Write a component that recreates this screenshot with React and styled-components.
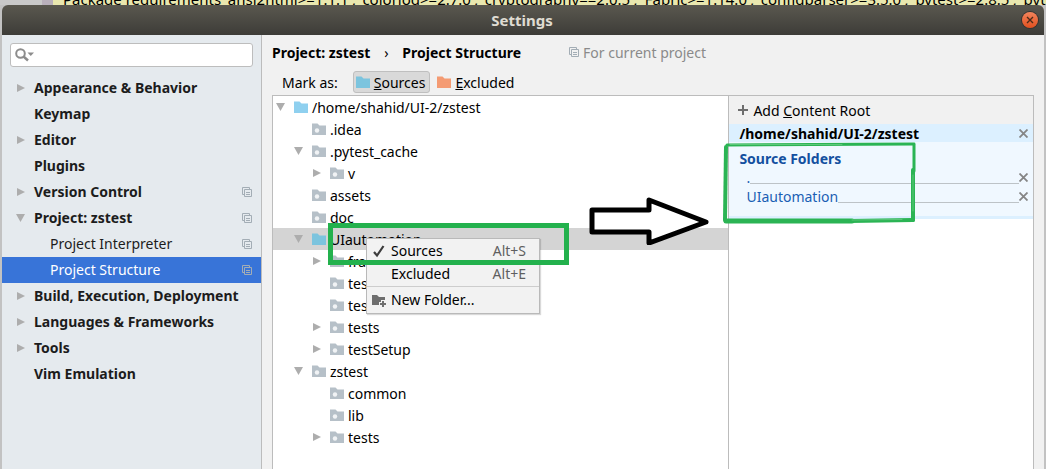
import React from 'react';
import styled, { createGlobalStyle } from 'styled-components';

const categories = [
  { label: 'Appearance & Behavior', arrow: 'right' },
  { label: 'Keymap' },
  { label: 'Editor', arrow: 'right' },
  { label: 'Plugins' },
  { label: 'Version Control', arrow: 'right', copy: true },
  { label: 'Project: zstest', arrow: 'down', copy: true },
  { label: 'Project Interpreter', child: true, copy: true },
  { label: 'Project Structure', child: true, copy: true, selected: true },
  { label: 'Build, Execution, Deployment', arrow: 'right' },
  { label: 'Languages & Frameworks', arrow: 'right' },
  { label: 'Tools', arrow: 'right' },
  { label: 'Vim Emulation' },
];

const folders = [
  { name: '/home/shahid/UI-2/zstest', level: 0, arrow: 'down', color: '#8fd0ef' },
  { name: '.idea', level: 1 },
  { name: '.pytest_cache', level: 1, arrow: 'down' },
  { name: 'v', level: 2, arrow: 'right' },
  { name: 'assets', level: 1 },
  { name: 'doc', level: 1 },
  { name: 'UIautomation', level: 1, arrow: 'down', color: '#7cc4de', selected: true },
  { name: 'fra', level: 2, arrow: 'right' },
  { name: 'tes', level: 2 },
  { name: 'tes', level: 2 },
  { name: 'tests', level: 2, arrow: 'right' },
  { name: 'testSetup', level: 2, arrow: 'right' },
  { name: 'zstest', level: 1, arrow: 'down' },
  { name: 'common', level: 2 },
  { name: 'lib', level: 2 },
  { name: 'tests', level: 2, arrow: 'right' },
];

const Arrow = ({ dir }) => (
  <ArrowSvg viewBox="0 0 10 10" aria-hidden="true">
    {dir === 'right' && <path d="M1 1L9 5L1 9Z" fill="#adadad" />}
    {dir === 'down' && <path d="M0 1H9L4.500 9Z" fill="#adadad" />}
  </ArrowSvg>
);

const Folder = ({ color }) => (
  <FolderSvg viewBox="0 0 14 12" aria-hidden="true">
    <path d="M0 0.500H5.500L7.500 2.500H14V12H0Z" fill={color || '#b6c0c8'} />
    {!color && <circle cx="5" cy="7.500" r="2.200" fill="#f1f3f5" />}
  </FolderSvg>
);

const Copy = () => (
  <CopySvg viewBox="0 0 10 10" aria-hidden="true">
    <path d="M2 7.500H0.500V0.500H7.500V2" />
    <path d="M2.500 2.500H9.500V9.500H2.500ZM4 5.500H8M4 7.500H8" />
  </CopySvg>
);

const Cross = () => (
  <svg width="9" height="9" viewBox="0 0 9 9" aria-hidden="true">
    <path d="M0.500 0.500L8.500 8.500M8.500 0.500L0.500 8.500" stroke="#858585" strokeWidth="1.800" />
  </svg>
);

const App = () => {
  return (
    <Desktop>
      <GlobalStyle />
      <Editor>
        <Gutter />
        <span>
          Package requirements 'ansi2html&gt;=1.1.1', 'colorlog&gt;=2.7.0', 'cryptography==2.0.5',
          'Fabric&gt;=1.14.0', 'configparser&gt;=3.5.0', 'pytest&gt;=2.8.5', 'pytest
        </span>
      </Editor>
      <Dialog>
        <TitleBar>
          <h1>Settings</h1>
          <CloseButton aria-label="Close">
            <svg width="8" height="8" viewBox="0 0 8 8">
              <path d="M1 1L7 7M7 1L1 7" stroke="#4b2a18" strokeWidth="1.400" />
            </svg>
          </CloseButton>
        </TitleBar>
        <Content>
          <Sidebar>
            <SearchBox>
              <svg width="20" height="14" viewBox="0 0 20 14" aria-hidden="true">
                <circle cx="5.500" cy="5.500" r="4.300" fill="none" stroke="#8c8c8c" strokeWidth="2" />
                <path d="M8.500 8.500L13 12.500" stroke="#8c8c8c" strokeWidth="2.500" />
                <path d="M12.500 4.500H19L15.750 8Z" fill="#8c8c8c" />
              </svg>
              <input type="text" aria-label="Search settings" />
            </SearchBox>
            <nav>
              {categories.map((item) => (
                <Category key={item.label} $child={item.child} $selected={item.selected}>
                  {!item.child && <Arrow dir={item.arrow} />}
                  <span>{item.label}</span>
                  {item.copy && <Copy />}
                </Category>
              ))}
            </nav>
          </Sidebar>
          <Main>
            <Breadcrumb>
              <b>Project: zstest</b>
              <i>›</i>
              <b>Project Structure</b>
              <Hint>
                <Copy />
                For current project
              </Hint>
            </Breadcrumb>
            <Toolbar>
              <span>Mark as:</span>
              <MarkButton $pressed>
                <Folder color="#7cc4de" />
                <span><u>S</u>ources</span>
              </MarkButton>
              <MarkButton>
                <Folder color="#f49b73" />
                <span><u>E</u>xcluded</span>
              </MarkButton>
            </Toolbar>
            <Panels>
              <Tree>
                {folders.map((folder, index) => (
                  <TreeRow key={index} $level={folder.level} $selected={folder.selected}>
                    <Arrow dir={folder.arrow} />
                    <Folder color={folder.color} />
                    <span>{folder.name}</span>
                  </TreeRow>
                ))}
                <ContextMenu>
                  <MenuItem>
                    <svg width="14" height="14" viewBox="0 0 14 14" aria-hidden="true">
                      <path d="M2 8L5 11.500L11.500 2" fill="none" stroke="#3c3c3c" strokeWidth="2.200" />
                    </svg>
                    <span>Sources</span>
                    <kbd>Alt+S</kbd>
                  </MenuItem>
                  <MenuItem>
                    <svg width="14" height="14" aria-hidden="true" />
                    <span>Excluded</span>
                    <kbd>Alt+E</kbd>
                  </MenuItem>
                  <hr />
                  <MenuItem>
                    <svg width="14" height="14" viewBox="0 0 14 14" aria-hidden="true">
                      <path d="M0 2H5L7 4H13V7H9V9H7V12H0Z" fill="#6e6e6e" />
                      <path d="M11 8V14M8 11H14" stroke="#6e6e6e" strokeWidth="2" />
                    </svg>
                    <span>New Folder...</span>
                  </MenuItem>
                </ContextMenu>
                <Highlight />
                <BigArrow viewBox="0 0 120 48" aria-hidden="true">
                  <path d="M3 13H60V3L117 25L60 46V35H3Z" />
                </BigArrow>
              </Tree>
              <Roots>
                <AddRoot>
                  <svg width="10" height="10" viewBox="0 0 10 10" aria-hidden="true">
                    <path d="M5 0V10M0 5H10" stroke="#6e6e6e" strokeWidth="2" />
                  </svg>
                  <span>Add <u>C</u>ontent Root</span>
                </AddRoot>
                <RootHeader>
                  <b>/home/shahid/UI-2/zstest</b>
                  <RemoveButton aria-label="Remove content root"><Cross /></RemoveButton>
                </RootHeader>
                <RootBody>
                  <h2>Source Folders</h2>
                  {['.', 'UIautomation'].map((name) => (
                    <SourceRow key={name}>
                      <a href="#source">{name}</a>
                      <Rule />
                      <RemoveButton aria-label={`Remove ${name}`}><Cross /></RemoveButton>
                    </SourceRow>
                  ))}
                </RootBody>
                <Marker viewBox="0 0 196 86" aria-hidden="true">
                  <path d="M5 4L192 3" strokeWidth="3" />
                  <path d="M192 4V30" strokeWidth="3" />
                  <path d="M191 29L191 79" strokeWidth="4" />
                  <path d="M4 6L3 79" strokeWidth="4" />
                  <path d="M4 80H130" strokeWidth="5" />
                  <path d="M128 80L191 79" strokeWidth="4" />
                  <path d="M8 3.500L120 3.500M191 34V70M130 79L180 78.500" stroke="#5cc779" strokeWidth="1" />
                </Marker>
              </Roots>
            </Panels>
          </Main>
        </Content>
      </Dialog>
    </Desktop>
  );
};

export default App;

const GlobalStyle = createGlobalStyle`
  * {
    box-sizing: border-box;
  }

  body {
    margin: 0;
    overflow: hidden;
    font-family: 'Noto Sans', 'Open Sans', sans-serif;
    font-size: 14px;
    color: #000;
  }

  button {
    font: inherit;
    color: inherit;
    padding: 0;
    border: none;
    background: transparent;
    text-align: left;
  }

  svg {
    flex: none;
  }
`;

const Desktop = styled.div`
  display: flex;
  flex-direction: column;
  height: 100vh;
  background: #c2c2c2;
`;

const Editor = styled.div`
  flex: none;
  display: flex;
  align-items: flex-end;
  gap: 10px;
  height: 5px;
  overflow: hidden;
  background: #e9e7ae;
  white-space: nowrap;

  span {
    font-size: 15px;
    line-height: 12px;
  }
`;

const Gutter = styled.div`
  flex: none;
  width: 53px;
  height: 100%;
  background: #c9c9c9;
  border-right: 11px solid #b9b0bb;
`;

const Dialog = styled.div`
  flex: 1;
  min-height: 0;
  display: flex;
  flex-direction: column;
  margin: 0 2px;
`;

const TitleBar = styled.header`
  flex: none;
  display: flex;
  align-items: center;
  height: 30px;
  padding: 0 6px 0 20px;
  border-radius: 6px 6px 0 0;
  background: linear-gradient(#5a584f, #3d3c38);

  h1 {
    flex: 1;
    margin: 0;
    font-size: 15px;
    text-align: center;
    color: #dfdbd2;
  }
`;

const CloseButton = styled.button`
  display: flex;
  align-items: center;
  justify-content: center;
  width: 16px;
  height: 16px;
  border-radius: 50%;
  background: linear-gradient(#f2845c, #e2501f);
  box-shadow: 0 0 0 1px #35332f;
`;

const Content = styled.div`
  flex: 1;
  min-height: 0;
  display: flex;
`;

const Sidebar = styled.aside`
  flex: none;
  width: 260px;
  border-right: 1px solid #bcbcbc;
  background: #e5eaee;
`;

const SearchBox = styled.label`
  display: flex;
  align-items: center;
  height: 24px;
  margin: 8px;
  padding: 0 4px;
  border: 1px solid #bdbdbd;
  border-radius: 3px;
  background: #fff;

  input {
    flex: 1;
    min-width: 0;
    border: none;
    outline: none;
    background: transparent;
    font: inherit;
  }
`;

const ArrowSvg = styled.svg`
  width: 10px;
  height: 10px;
`;

const FolderSvg = styled.svg`
  width: 14px;
  height: 12px;
`;

const CopySvg = styled.svg`
  width: 10px;
  height: 10px;
  fill: none;
  stroke: #a3adb5;
`;

const Category = styled.button`
  display: flex;
  align-items: center;
  gap: 8px;
  width: 100%;
  height: 26px;
  padding: 0 9px 0 ${(props) => (props.$child ? '48px' : '14px')};
  font-weight: ${(props) => (props.$child ? 400 : 700)};
  color: ${(props) => (props.$selected ? '#fff' : '#1c1c1c')};
  background: ${(props) => (props.$selected ? '#3874d8' : 'transparent')};
  white-space: nowrap;

  span {
    flex: 1;
    padding-bottom: 2px;
  }
`;

const Main = styled.main`
  flex: 1;
  min-width: 0;
  display: flex;
  flex-direction: column;
  padding: 0 10px;
  background: #f1f1f1;
`;

const Breadcrumb = styled.div`
  display: flex;
  align-items: center;
  height: 34px;
  white-space: nowrap;

  i {
    width: 32px;
    font-style: normal;
    text-align: center;
  }
`;

const Hint = styled.span`
  display: flex;
  align-items: center;
  gap: 4px;
  margin-left: 48px;
  color: #8a8a8a;
`;

const Toolbar = styled.div`
  display: flex;
  align-items: center;
  gap: 4px;
  height: 26px;
  padding-left: 10px;

  > span {
    margin-right: 11px;
  }
`;

const MarkButton = styled.button`
  display: flex;
  align-items: center;
  gap: 4px;
  height: 22px;
  padding: 0 4px 0 2px;
  border: 1px solid ${(props) => (props.$pressed ? '#bfbfbf' : 'transparent')};
  border-radius: 3px;
  background: ${(props) => (props.$pressed ? '#d9d9d9' : 'transparent')};
`;

const Panels = styled.div`
  flex: 1;
  min-height: 0;
  display: flex;
  border: 1px solid #bcbcbc;
  border-bottom: none;
  background: #fff;
`;

const Tree = styled.div`
  position: relative;
  flex: 3;
  min-width: 0;
`;

const TreeRow = styled.button`
  display: flex;
  align-items: center;
  gap: 4px;
  width: 100%;
  height: 22px;
  padding-left: ${(props) => 3 + props.$level * 18}px;
  background: ${(props) => (props.$selected ? '#d4d4d4' : 'transparent')};

  ${ArrowSvg} {
    margin-right: 4px;
  }
`;

const ContextMenu = styled.div`
  position: absolute;
  left: 93px;
  top: 142px;
  width: 174px;
  padding-bottom: 2px;
  border: 1px solid #b9b9b9;
  background: #f2f2f2;
  box-shadow: 1px 1px 1px rgba(0, 0, 0, 0.15);

  hr {
    height: 1px;
    margin: 1px 0;
    border: none;
    background: #cdcdcd;
  }
`;

const MenuItem = styled.button`
  display: flex;
  align-items: center;
  gap: 5px;
  width: 100%;
  height: 23px;
  padding: 0 13px 0 5px;

  span {
    flex: 1;
  }

  kbd {
    font: inherit;
    color: #5f5f5f;
  }
`;

const Highlight = styled.div`
  position: absolute;
  left: 55px;
  top: 127px;
  width: 241px;
  height: 42px;
  border: 5px solid #23b14d;
`;

const BigArrow = styled.svg`
  position: absolute;
  right: 19px;
  top: 101px;
  width: 120px;
  height: 48px;
  fill: #fff;
  stroke: #000;
  stroke-width: 5;
  stroke-linejoin: round;
`;

const Roots = styled.section`
  position: relative;
  flex: 2;
  min-width: 0;
  border-left: 1px solid #bcbcbc;
`;

const AddRoot = styled.button`
  display: flex;
  align-items: center;
  gap: 5px;
  width: 100%;
  height: 28px;
  padding-left: 9px;
  background: #f1f1f1;
`;

const RootHeader = styled.div`
  display: flex;
  align-items: center;
  justify-content: space-between;
  height: 18px;
  padding: 0 5px 0 10px;
  background: #dcf0ff;
`;

const RootBody = styled.div`
  padding: 8px 5px 10px 10px;
  border-bottom: 3px solid #dcf0ff;
  background: #f0f8ff;

  h2 {
    margin: 0;
    font-size: 14px;
    line-height: 18px;
    color: #1450a0;
  }
`;

const SourceRow = styled.div`
  display: flex;
  align-items: center;
  height: 19px;
  padding-left: 7px;

  a {
    color: #1a5fb4;
    text-decoration: none;
  }
`;

const Rule = styled.div`
  flex: 1;
  height: 12px;
  border-bottom: 1px solid #bdc3c7;
`;

const RemoveButton = styled.button`
  display: flex;
`;

const Marker = styled.svg`
  position: absolute;
  left: -7px;
  top: 45px;
  width: 196px;
  height: 86px;
  fill: none;
  stroke: #2bb454;
  stroke-linecap: round;
`;
